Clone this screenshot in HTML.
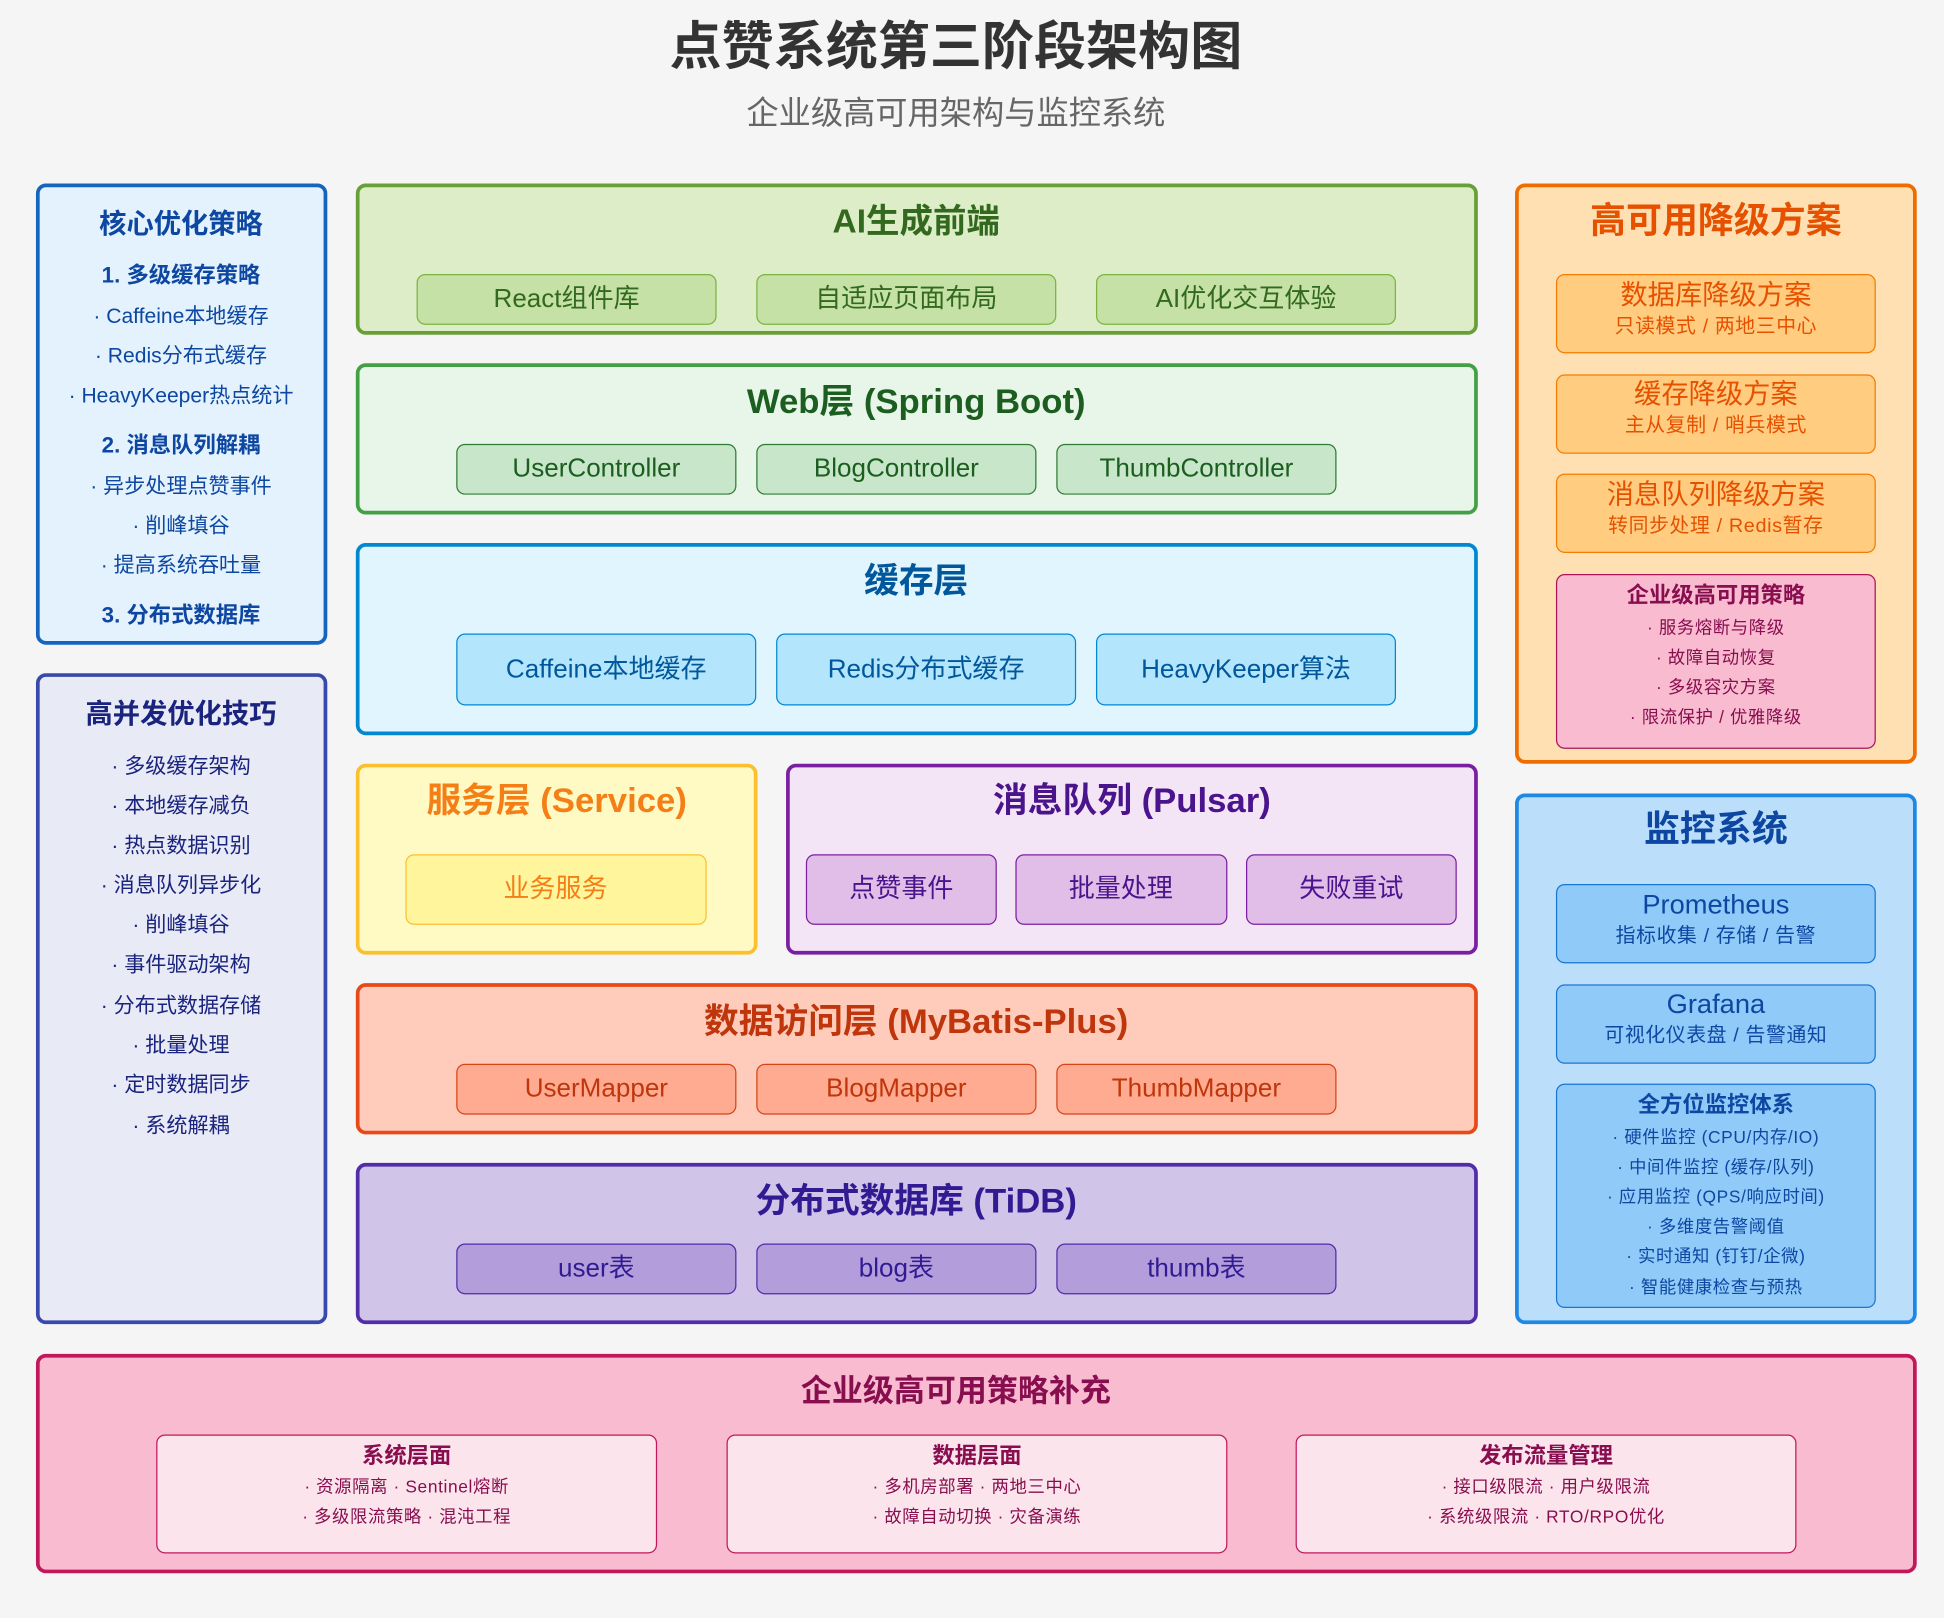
<!DOCTYPE html>
<html><head><meta charset="utf-8"><style>
html,body{margin:0;padding:0;background:#f5f5f5;width:1944px;height:1618px;overflow:hidden}
#w{position:absolute;left:0;top:0;width:1568px;height:1305px;transform:scale(1.23980);transform-origin:0 0;font-family:"Liberation Sans","Noto Sans CJK SC",sans-serif}
.b{position:absolute;box-sizing:border-box;border-radius:8px;border:3px solid}
.s{position:absolute;box-sizing:border-box;border-radius:7px;border:1.5px solid}
.t{position:absolute;white-space:nowrap;text-align:center;line-height:1;transform:translate(-50%,-50%)}
.bd{font-weight:bold}
.sm{letter-spacing:0.5px}
</style></head><body><div id="w">
<div class="t bd" style="left:771px;top:38px;font-size:42px;color:#333">点赞系统第三阶段架构图</div>
<div class="t" style="left:771px;top:91px;font-size:26px;color:#666">企业级高可用架构与监控系统</div>

<!-- left 1 -->
<div class="b" style="left:29px;top:148px;width:235px;height:372px;border-color:#1565c0;background:#e3f2fd"></div>
<div style="color:#0d47a1">
<div class="t bd" style="left:146px;top:181px;font-size:22px">核心优化策略</div>
<div class="t bd" style="left:146px;top:222px;font-size:18px">1. 多级缓存策略</div>
<div class="t" style="left:146px;top:255px;font-size:17px">· Caffeine本地缓存</div>
<div class="t" style="left:146px;top:287px;font-size:17px">· Redis分布式缓存</div>
<div class="t" style="left:146px;top:319px;font-size:17px">· HeavyKeeper热点统计</div>
<div class="t bd" style="left:146px;top:359px;font-size:18px">2. 消息队列解耦</div>
<div class="t" style="left:146px;top:392px;font-size:17px">· 异步处理点赞事件</div>
<div class="t" style="left:146px;top:424px;font-size:17px">· 削峰填谷</div>
<div class="t" style="left:146px;top:456px;font-size:17px">· 提高系统吞吐量</div>
<div class="t bd" style="left:146px;top:496px;font-size:18px">3. 分布式数据库</div>
</div>
<!-- left 2 -->
<div class="b" style="left:29px;top:543px;width:235px;height:525px;border-color:#3949ab;background:#e8eaf6"></div>
<div style="color:#1a237e">
<div class="t bd" style="left:146px;top:576px;font-size:22px">高并发优化技巧</div>
<div class="t" style="left:146px;top:618px;font-size:17px">· 多级缓存架构</div>
<div class="t" style="left:146px;top:650px;font-size:17px">· 本地缓存减负</div>
<div class="t" style="left:146px;top:682px;font-size:17px">· 热点数据识别</div>
<div class="t" style="left:146px;top:714px;font-size:17px">· 消息队列异步化</div>
<div class="t" style="left:146px;top:746px;font-size:17px">· 削峰填谷</div>
<div class="t" style="left:146px;top:778px;font-size:17px">· 事件驱动架构</div>
<div class="t" style="left:146px;top:811px;font-size:17px">· 分布式数据存储</div>
<div class="t" style="left:146px;top:843px;font-size:17px">· 批量处理</div>
<div class="t" style="left:146px;top:875px;font-size:17px">· 定时数据同步</div>
<div class="t" style="left:146px;top:908px;font-size:17px">· 系统解耦</div>
</div>

<!-- AI -->
<div class="b" style="left:287px;top:148px;width:905px;height:122px;border-color:#689f38;background:#dcedc8"></div>
<div class="t bd" style="left:739px;top:179px;font-size:27px;color:#33691e">AI生成前端</div>
<div class="s" style="left:336px;top:221px;width:242px;height:41px;background:#c5e1a5;border-color:#7cb342"></div>
<div class="s" style="left:610px;top:221px;width:242px;height:41px;background:#c5e1a5;border-color:#7cb342"></div>
<div class="s" style="left:884px;top:221px;width:242px;height:41px;background:#c5e1a5;border-color:#7cb342"></div>
<div class="t" style="left:457px;top:241px;font-size:21px;color:#33691e">React组件库</div>
<div class="t" style="left:731px;top:241px;font-size:21px;color:#33691e">自适应页面布局</div>
<div class="t" style="left:1005px;top:241px;font-size:21px;color:#33691e">AI优化交互体验</div>

<!-- Web -->
<div class="b" style="left:287px;top:293px;width:905px;height:122px;border-color:#43a047;background:#e8f5e9"></div>
<div class="t bd" style="left:739px;top:324px;font-size:28px;color:#1b5e20">Web层 (Spring Boot)</div>
<div class="s" style="left:368px;top:358px;width:226px;height:41px;background:#c8e6c9;border-color:#2e7d32"></div>
<div class="s" style="left:610px;top:358px;width:226px;height:41px;background:#c8e6c9;border-color:#2e7d32"></div>
<div class="s" style="left:852px;top:358px;width:226px;height:41px;background:#c8e6c9;border-color:#2e7d32"></div>
<div class="t" style="left:481px;top:378px;font-size:21px;color:#1b5e20">UserController</div>
<div class="t" style="left:723px;top:378px;font-size:21px;color:#1b5e20">BlogController</div>
<div class="t" style="left:965px;top:378px;font-size:21px;color:#1b5e20">ThumbController</div>

<!-- Cache -->
<div class="b" style="left:287px;top:438px;width:905px;height:155px;border-color:#0288d1;background:#e1f5fe"></div>
<div class="t bd" style="left:739px;top:469px;font-size:28px;color:#01579b">缓存层</div>
<div class="s" style="left:368px;top:511px;width:242px;height:58px;background:#b3e5fc;border-color:#0288d1"></div>
<div class="s" style="left:626px;top:511px;width:242px;height:58px;background:#b3e5fc;border-color:#0288d1"></div>
<div class="s" style="left:884px;top:511px;width:242px;height:58px;background:#b3e5fc;border-color:#0288d1"></div>
<div class="t" style="left:489px;top:540px;font-size:21px;color:#01579b">Caffeine本地缓存</div>
<div class="t" style="left:747px;top:540px;font-size:21px;color:#01579b">Redis分布式缓存</div>
<div class="t" style="left:1005px;top:540px;font-size:21px;color:#01579b">HeavyKeeper算法</div>

<!-- Service -->
<div class="b" style="left:287px;top:616px;width:324px;height:154px;border-color:#fbc02d;background:#fff9c4"></div>
<div class="t bd" style="left:449px;top:646px;font-size:28px;color:#f57f17">服务层 (Service)</div>
<div class="s" style="left:327px;top:689px;width:243px;height:57px;background:#fff59d;border-color:#fbc02d"></div>
<div class="t" style="left:448px;top:717px;font-size:21px;color:#f57f17">业务服务</div>

<!-- MQ -->
<div class="b" style="left:634px;top:616px;width:558px;height:154px;border-color:#7b1fa2;background:#f3e5f5"></div>
<div class="t bd" style="left:913px;top:646px;font-size:28px;color:#4a148c">消息队列 (Pulsar)</div>
<div class="s" style="left:650px;top:689px;width:154px;height:57px;background:#e1bee7;border-color:#7b1fa2"></div>
<div class="s" style="left:819px;top:689px;width:171px;height:57px;background:#e1bee7;border-color:#7b1fa2"></div>
<div class="s" style="left:1005px;top:689px;width:170px;height:57px;background:#e1bee7;border-color:#7b1fa2"></div>
<div class="t" style="left:727px;top:717px;font-size:21px;color:#4a148c">点赞事件</div>
<div class="t" style="left:904px;top:717px;font-size:21px;color:#4a148c">批量处理</div>
<div class="t" style="left:1090px;top:717px;font-size:21px;color:#4a148c">失败重试</div>

<!-- Data access -->
<div class="b" style="left:287px;top:793px;width:905px;height:122px;border-color:#e64a19;background:#ffccbc"></div>
<div class="t bd" style="left:739px;top:824px;font-size:28px;color:#bf360c">数据访问层 (MyBatis-Plus)</div>
<div class="s" style="left:368px;top:858px;width:226px;height:41px;background:#ffab91;border-color:#d84315"></div>
<div class="s" style="left:610px;top:858px;width:226px;height:41px;background:#ffab91;border-color:#d84315"></div>
<div class="s" style="left:852px;top:858px;width:226px;height:41px;background:#ffab91;border-color:#d84315"></div>
<div class="t" style="left:481px;top:878px;font-size:21px;color:#bf360c">UserMapper</div>
<div class="t" style="left:723px;top:878px;font-size:21px;color:#bf360c">BlogMapper</div>
<div class="t" style="left:965px;top:878px;font-size:21px;color:#bf360c">ThumbMapper</div>

<!-- TiDB -->
<div class="b" style="left:287px;top:938px;width:905px;height:130px;border-color:#512da8;background:#d1c4e9"></div>
<div class="t bd" style="left:739px;top:969px;font-size:28px;color:#311b92">分布式数据库 (TiDB)</div>
<div class="s" style="left:368px;top:1003px;width:226px;height:41px;background:#b39ddb;border-color:#512da8"></div>
<div class="s" style="left:610px;top:1003px;width:226px;height:41px;background:#b39ddb;border-color:#512da8"></div>
<div class="s" style="left:852px;top:1003px;width:226px;height:41px;background:#b39ddb;border-color:#512da8"></div>
<div class="t" style="left:481px;top:1023px;font-size:21px;color:#311b92">user表</div>
<div class="t" style="left:723px;top:1023px;font-size:21px;color:#311b92">blog表</div>
<div class="t" style="left:965px;top:1023px;font-size:21px;color:#311b92">thumb表</div>

<!-- Right 1 -->
<div class="b" style="left:1222px;top:148px;width:324px;height:468px;border-color:#ef6c00;background:#ffe0b2"></div>
<div class="t bd" style="left:1384px;top:179px;font-size:29px;color:#e65100">高可用降级方案</div>
<div class="s" style="left:1255px;top:221px;width:258px;height:64px;background:#ffcc80;border-color:#f57c00"></div>
<div class="s" style="left:1255px;top:302px;width:258px;height:64px;background:#ffcc80;border-color:#f57c00"></div>
<div class="s" style="left:1255px;top:382px;width:258px;height:64px;background:#ffcc80;border-color:#f57c00"></div>
<div style="color:#e65100">
<div class="t" style="left:1384px;top:238px;font-size:22px">数据库降级方案</div>
<div class="t sm" style="left:1384px;top:264px;font-size:16px">只读模式&nbsp;/&nbsp;两地三中心</div>
<div class="t" style="left:1384px;top:318px;font-size:22px">缓存降级方案</div>
<div class="t sm" style="left:1384px;top:344px;font-size:16px">主从复制&nbsp;/&nbsp;哨兵模式</div>
<div class="t" style="left:1384px;top:399px;font-size:22px">消息队列降级方案</div>
<div class="t sm" style="left:1384px;top:425px;font-size:16px">转同步处理&nbsp;/&nbsp;Redis暂存</div>
</div>
<div class="s" style="left:1255px;top:463px;width:258px;height:141px;background:#f8bbd0;border-color:#ad1457"></div>
<div style="color:#880e4f">
<div class="t bd" style="left:1384px;top:480px;font-size:18px">企业级高可用策略</div>
<div class="t sm" style="left:1384px;top:506px;font-size:14px">· 服务熔断与降级</div>
<div class="t sm" style="left:1384px;top:530px;font-size:14px">· 故障自动恢复</div>
<div class="t sm" style="left:1384px;top:554px;font-size:14px">· 多级容灾方案</div>
<div class="t sm" style="left:1384px;top:578px;font-size:14px">· 限流保护&nbsp;/&nbsp;优雅降级</div>
</div>

<!-- Right 2 -->
<div class="b" style="left:1222px;top:640px;width:324px;height:428px;border-color:#1e88e5;background:#bbdefb"></div>
<div style="color:#0d47a1">
<div class="t bd" style="left:1384px;top:670px;font-size:29px">监控系统</div>
<div class="s" style="left:1255px;top:713px;width:258px;height:64px;background:#90caf9;border-color:#1976d2"></div>
<div class="s" style="left:1255px;top:794px;width:258px;height:64px;background:#90caf9;border-color:#1976d2"></div>
<div class="s" style="left:1255px;top:874px;width:258px;height:181px;background:#90caf9;border-color:#1976d2"></div>
<div class="t" style="left:1384px;top:730px;font-size:22px">Prometheus</div>
<div class="t sm" style="left:1384px;top:756px;font-size:16px">指标收集&nbsp;/&nbsp;存储&nbsp;/&nbsp;告警</div>
<div class="t" style="left:1384px;top:810px;font-size:22px">Grafana</div>
<div class="t sm" style="left:1384px;top:836px;font-size:16px">可视化仪表盘&nbsp;/&nbsp;告警通知</div>
<div class="t bd" style="left:1384px;top:891px;font-size:18px">全方位监控体系</div>
<div class="t sm" style="left:1384px;top:917px;font-size:14px">· 硬件监控 (CPU/内存/IO)</div>
<div class="t sm" style="left:1384px;top:941px;font-size:14px">· 中间件监控 (缓存/队列)</div>
<div class="t sm" style="left:1384px;top:965px;font-size:14px">· 应用监控 (QPS/响应时间)</div>
<div class="t sm" style="left:1384px;top:989px;font-size:14px">· 多维度告警阈值</div>
<div class="t sm" style="left:1384px;top:1013px;font-size:14px">· 实时通知 (钉钉/企微)</div>
<div class="t sm" style="left:1384px;top:1038px;font-size:14px">· 智能健康检查与预热</div>
</div>

<!-- Bottom -->
<div class="b" style="left:29px;top:1092px;width:1517px;height:177px;border-color:#c2185b;background:#f8bbd0"></div>
<div style="color:#880e4f">
<div class="t bd" style="left:771px;top:1123px;font-size:25px">企业级高可用策略补充</div>
<div class="s" style="left:126px;top:1157px;width:404px;height:96px;background:#fce4ec;border-color:#c2185b"></div>
<div class="s" style="left:586px;top:1157px;width:404px;height:96px;background:#fce4ec;border-color:#c2185b"></div>
<div class="s" style="left:1045px;top:1157px;width:404px;height:96px;background:#fce4ec;border-color:#c2185b"></div>
<div class="t bd" style="left:328px;top:1174px;font-size:18px">系统层面</div>
<div class="t sm" style="left:328px;top:1199px;font-size:14px">· 资源隔离&nbsp;· Sentinel熔断</div>
<div class="t sm" style="left:328px;top:1223px;font-size:14px">· 多级限流策略&nbsp;· 混沌工程</div>
<div class="t bd" style="left:788px;top:1174px;font-size:18px">数据层面</div>
<div class="t sm" style="left:788px;top:1199px;font-size:14px">· 多机房部署&nbsp;· 两地三中心</div>
<div class="t sm" style="left:788px;top:1223px;font-size:14px">· 故障自动切换&nbsp;· 灾备演练</div>
<div class="t bd" style="left:1247px;top:1174px;font-size:18px">发布流量管理</div>
<div class="t sm" style="left:1247px;top:1199px;font-size:14px">· 接口级限流&nbsp;· 用户级限流</div>
<div class="t sm" style="left:1247px;top:1223px;font-size:14px">· 系统级限流&nbsp;· RTO/RPO优化</div>
</div>
</div></body></html>
